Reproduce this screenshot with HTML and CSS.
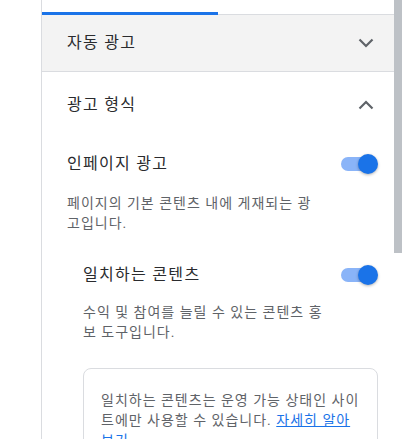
FILE: index.html
```html
<!DOCTYPE html>
<html lang="ko">
<head>
<meta charset="utf-8">
<link rel="stylesheet" href="styles.css">
</head>
<body>
<div class="page">
  <div class="gutter"></div>
  <div class="panel">
    <div class="tabs">
      <div class="tab-indicator"></div>
      <div class="tab-rest"></div>
    </div>
    <div class="section collapsed">
      <span class="section-title">자동 광고</span>
      <svg class="chev" width="16" height="10" viewBox="0 0 16 10"><path d="M1.5 1.5 L8 8 L14.5 1.5" fill="none" stroke="#5f6368" stroke-width="2.2"/></svg>
    </div>
    <div class="section open">
      <span class="section-title">광고 형식</span>
      <svg class="chev" width="16" height="10" viewBox="0 0 16 10"><path d="M1.5 8.5 L8 2 L14.5 8.5" fill="none" stroke="#5f6368" stroke-width="2.2"/></svg>
    </div>
    <div class="content">
      <div class="row row-main">
        <span class="row-title">인페이지 광고</span>
        <span class="switch"><span class="track"></span><span class="knob"></span></span>
      </div>
      <p class="desc desc-main">페이지의 기본 콘텐츠 내에 게재되는 광고입니다.</p>
      <div class="nested">
        <div class="row row-sub">
          <span class="row-title">일치하는 콘텐츠</span>
          <span class="switch"><span class="track"></span><span class="knob"></span></span>
        </div>
        <p class="desc desc-sub">수익 및 참여를 늘릴 수 있는 콘텐츠 홍보 도구입니다.</p>
        <div class="card">
          <p class="card-text">일치하는 콘텐츠는 운영 가능 상태인 사이트에만 사용할 수 있습니다. <a href="#" class="link">자세히 알아보기</a></p>
        </div>
      </div>
    </div>
  </div>
  <div class="scrollbar"></div>
</div>
</body>
</html>
```

FILE: styles.css
```css
html, body {
  margin: 0;
  padding: 0;
  background: #ffffff;
  overflow: hidden;
}
body {
  font-family: Roboto, "Noto Sans CJK KR", sans-serif;
  color: #202124;
}
.page {
  display: flex;
  width: 402px;
  height: 439px;
  overflow: hidden;
}
.gutter {
  width: 41px;
  flex: none;
}
.panel {
  width: 352px;
  flex: none;
  border-left: 1px solid #dadce0;
}
.scrollbar {
  width: 8px;
  height: 253px;
  flex: none;
  background: #bdc1c6;
}
.tabs {
  height: 15px;
  display: flex;
  align-items: flex-end;
}
.tab-indicator {
  width: 176px;
  height: 3px;
  background: #1a73e8;
}
.tab-rest {
  flex: 1;
  height: 1px;
  background: #dadce0;
}
.section {
  display: flex;
  align-items: center;
  justify-content: space-between;
  padding: 0 20px 0 25px;
}
.section.collapsed {
  height: 56px;
  background: #f3f3f3;
  border-bottom: 1px solid #dadce0;
}
.section.open {
  height: 66px;
}
.section-title {
  font-size: 16px;
  line-height: 20px;
  letter-spacing: 1.3px;
  color: #2a2b2e;
}
.chev {
  display: block;
}
.content {
  padding: 16px 16px 0 25px;
}
.row {
  display: flex;
  align-items: center;
  justify-content: space-between;
  height: 20px;
}
.row-title {
  font-size: 16px;
  line-height: 20px;
  letter-spacing: 1.3px;
  color: #2a2b2e;
}
.switch {
  display: flex;
  align-items: center;
  width: 37px;
  height: 20px;
  position: relative;
}
.track {
  width: 36px;
  height: 14px;
  border-radius: 7px;
  background: #8ab4f8;
}
.knob {
  position: absolute;
  right: 0;
  top: 0;
  width: 20px;
  height: 20px;
  border-radius: 50%;
  background: #1a73e8;
  box-shadow: 0 1px 3px rgba(0, 0, 0, 0.3);
}
.desc {
  margin: 0;
  font-size: 14px;
  line-height: 20px;
  letter-spacing: 1px;
  color: #5f6368;
}
.desc-main {
  margin-top: 19px;
  padding-right: 56px;
}
.nested {
  padding-left: 16px;
  margin-top: 32px;
}
.desc-sub {
  margin-top: 17px;
  padding-right: 45px;
}
.card {
  margin-top: 26px;
  border: 1px solid #dadce0;
  border-radius: 8px;
  padding: 21px 17px 20px 17px;
}
.card-text {
  margin: 0;
  font-size: 14px;
  line-height: 20px;
  letter-spacing: 1px;
  color: #5f6368;
}
.link {
  color: #1a73e8;
  text-decoration: underline;
}
```
